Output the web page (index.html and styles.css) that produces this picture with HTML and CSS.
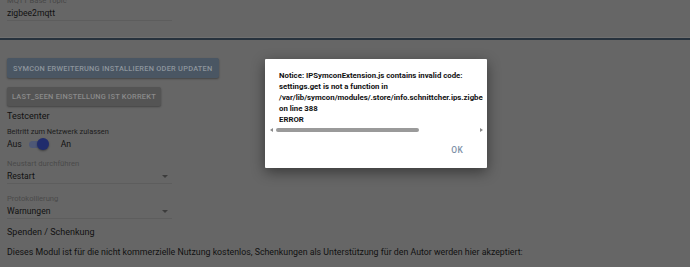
FILE: index.html
```html
<!DOCTYPE html>
<html lang="en">
<head>
    <meta charset="UTF-8">
    <title>Zigbee2MQTT Konfigurator</title>
    <link rel="stylesheet" href="styles.css">
</head>
<body>
    <div class="page">
        <div class="top">
            <div class="field">
                <div class="label">MQTT Base Topic</div>
                <div class="value">zigbee2mqtt</div>
            </div>
        </div>

        <div class="actions">
            <button class="btn btn-primary">Symcon Erweiterung installieren oder updaten</button>
            <button class="btn btn-grey">last_seen Einstellung ist korrekt</button>
        </div>

        <div class="heading">Testcenter</div>

        <div class="switch-field">
            <div class="switch-label">Beitritt zum Netzwerk zulassen</div>
            <div class="switch-row">
                <span>Aus</span>
                <span class="switch"><span class="knob"></span></span>
                <span>An</span>
            </div>
        </div>

        <div class="field select">
            <div class="label">Neustart durchführen</div>
            <div class="value">Restart<span class="caret"></span></div>
        </div>

        <div class="field select">
            <div class="label">Protokollierung</div>
            <div class="value">Warnungen<span class="caret"></span></div>
        </div>

        <div class="heading donate">Spenden / Schenkung</div>
        <div class="text">Dieses Modul ist für die nicht kommerzielle Nutzung kostenlos, Schenkungen als Unterstützung für den Autor werden hier akzeptiert:</div>
    </div>

    <div class="dialog">
        <div class="dialog-body">
            <div class="message">Notice: IPSymconExtension.js contains invalid code:<br>settings.get is not a function in<br>/var/lib/symcon/modules/.store/info.schnittcher.ips.zigbee2mqtt/Zigbee2MQTTConfigurator/module.php<br>on line 388<br>ERROR</div>
            <div class="scrollbar">
                <span class="arrow left"></span>
                <span class="track"><span class="thumb"></span></span>
                <span class="arrow right"></span>
            </div>
        </div>
        <div class="dialog-actions">
            <span class="ok">OK</span>
        </div>
    </div>
</body>
</html>
```

FILE: styles.css
```css
body {
    margin: 0;
    font-family: Roboto, 'Liberation Sans', sans-serif;
    background: #666666;
    color: #111111;
    height: 267px;
    overflow: hidden;
}

.page {
    padding: 0 7px;
}

.top {
    margin: -4px -7px 0;
    padding: 0 7px;
    height: 42px;
    border-bottom: 2px solid #27323d;
    box-shadow: 0 -1px 0 #6f6f6f inset;
}

.field {
    width: 165px;
    border-bottom: 1px solid #5d5d5d;
}

.label {
    font-size: 7.6px;
    line-height: 10px;
    color: #474747;
}

.value {
    position: relative;
    font-size: 8.6px;
    line-height: 12px;
    padding: 1px 0;
}

.actions {
    margin-top: 18px;
    display: flex;
    flex-direction: column;
    align-items: flex-start;
    gap: 9px;
}

.btn {
    border: none;
    border-radius: 2px;
    font-family: inherit;
    font-weight: 500;
    font-size: 7.4px;
    text-transform: uppercase;
    letter-spacing: 0.25px;
    white-space: nowrap;
    padding: 0 5px;
    height: 20px;
    box-shadow: 0 1px 2px rgba(0, 0, 0, 0.35);
}

.btn-primary {
    background: #4a5663;
    color: #8d959d;
    padding: 0 6px;
}

.btn-grey {
    background: #545454;
    color: #8b8b8b;
    height: 19px;
}

.heading {
    font-size: 9px;
    line-height: 12px;
    margin-top: 4px;
}

.switch-field {
    margin-top: 5px;
}

.switch-label {
    font-size: 7.4px;
    line-height: 10px;
    color: #1c1c1c;
}

.switch-row {
    display: flex;
    align-items: center;
    font-size: 8.6px;
    line-height: 12px;
    margin-top: 1px;
}

.switch {
    position: relative;
    width: 18px;
    height: 7px;
    border-radius: 4px;
    background: #4e5876;
    margin: 0 14px 0 7px;
}

.knob {
    position: absolute;
    width: 12px;
    height: 12px;
    border-radius: 50%;
    background: #202c6c;
    right: -2px;
    top: -2.5px;
    box-shadow: 0 1px 2px rgba(0, 0, 0, 0.4);
}

.select {
    margin-top: 9px;
}

.select + .select {
    margin-top: 10px;
}

.select .label {
    color: #4a4a4a;
}

.caret {
    position: absolute;
    right: 4px;
    top: 6px;
    border-left: 3px solid transparent;
    border-right: 3px solid transparent;
    border-top: 3px solid #3c3c3c;
}

.donate {
    margin-top: 7px;
}

.text {
    font-size: 8.8px;
    line-height: 12px;
    margin-top: 8px;
    white-space: nowrap;
}

.dialog {
    position: absolute;
    left: 265px;
    top: 59px;
    width: 222px;
    height: 109px;
    background: #ffffff;
    border-radius: 1px;
    box-shadow: 0 4px 14px rgba(0, 0, 0, 0.45);
}

.dialog-body {
    padding: 11px 4px 0 5px;
}

.message {
    padding-left: 9px;
    font-size: 7.8px;
    font-weight: bold;
    line-height: 11px;
    white-space: nowrap;
    overflow: hidden;
    color: #111111;
}

.scrollbar {
    display: flex;
    align-items: center;
    height: 7px;
    margin-top: 1px;
}

.arrow {
    width: 0;
    height: 0;
    border-top: 2.5px solid transparent;
    border-bottom: 2.5px solid transparent;
}

.arrow.left {
    border-right: 3px solid #8a8a8a;
}

.arrow.right {
    border-left: 3px solid #8a8a8a;
}

.track {
    flex: 1;
    margin: 0 3px;
}

.thumb {
    display: block;
    width: 143px;
    height: 4px;
    border-radius: 2px;
    background: #9a9a9a;
}

.dialog-actions {
    display: flex;
    justify-content: flex-end;
    padding: 12px 24px 0 0;
}

.ok {
    font-size: 8.4px;
    font-weight: 500;
    letter-spacing: 0.3px;
    color: #7d8fa6;
}
```
